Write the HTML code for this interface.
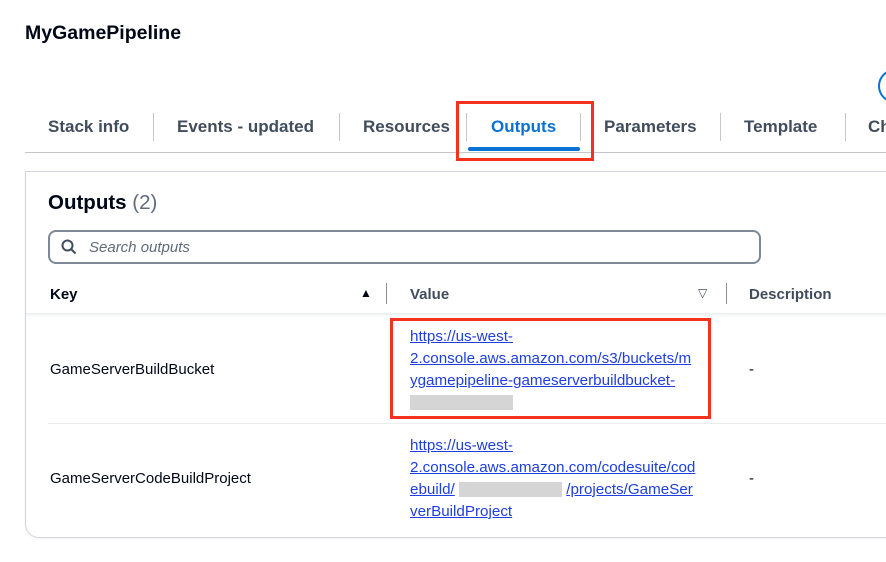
<!DOCTYPE html>
<html><head><style>
body{margin:0;width:886px;height:562px;background:#fff;font-family:"Liberation Sans",sans-serif;color:#000716;position:relative;overflow:hidden}
.a{position:absolute;white-space:nowrap}
.tab{position:absolute;top:117px;font-size:17px;font-weight:bold;color:#414d5c}
.sep{position:absolute;width:1px;background:#c6c6cd}
a{color:#1f3ee0;text-decoration:underline}
.lk{position:absolute;left:410px;font-size:15.2px;line-height:22px;width:310px}
.gray{display:inline-block;width:103px;height:15px;background:#d5d5d5;vertical-align:middle}
</style></head><body>
<div class="a" style="left:25px;top:22px;font-size:19.5px;font-weight:bold">MyGamePipeline</div>
<div class="a" style="left:878px;top:69px;width:30px;height:30px;border:2px solid #0972d3;border-radius:50%"></div>
<div class="tab" style="left:48px">Stack info</div>
<div class="sep" style="left:153px;top:113px;height:28px"></div>
<div class="tab" style="left:177px">Events - updated</div>
<div class="sep" style="left:339px;top:113px;height:28px"></div>
<div class="tab" style="left:363px">Resources</div>
<div class="sep" style="left:466px;top:113px;height:28px"></div>
<div class="tab" style="left:491px;color:#0972d3">Outputs</div>
<div class="sep" style="left:580px;top:113px;height:28px"></div>
<div class="tab" style="left:604px">Parameters</div>
<div class="sep" style="left:720px;top:113px;height:28px"></div>
<div class="tab" style="left:744px">Template</div>
<div class="sep" style="left:845px;top:113px;height:28px"></div>
<div class="tab" style="left:868px">Ch</div>
<div class="a" style="left:468px;top:147px;width:112px;height:4px;background:#0972d3;border-radius:2px"></div>
<div class="a" style="left:25px;top:152px;width:861px;height:1px;background:#c6c6cd"></div>
<div class="a" style="left:456px;top:101px;width:132px;height:54px;border:3px solid #f4321d"></div>
<div class="a" style="left:25px;top:171px;width:880px;height:365px;border:1px solid #d1d5db;border-radius:0 0 0 14px;box-shadow:0 1px 2px rgba(0,0,0,.05)"></div>
<div class="a" style="left:48px;top:191px;font-size:20.5px;font-weight:bold">Outputs <span style="font-weight:normal;color:#5f6b7a">(2)</span></div>
<div class="a" style="left:48px;top:230px;width:709px;height:30px;border:2px solid #7d8998;border-radius:8px"></div>
<svg class="a" style="left:61px;top:239px" width="16" height="16" viewBox="0 0 16 16"><circle cx="6.5" cy="6.5" r="5" fill="none" stroke="#414d5c" stroke-width="2"/><path d="M10 10l4.5 4.5" stroke="#414d5c" stroke-width="2"/></svg>
<div class="a" style="left:89px;top:239px;font-size:15px;font-style:italic;color:#5f6b7a">Search outputs</div>
<div class="a" style="left:50px;top:286px;font-size:15px;font-weight:bold">Key</div>
<div class="a" style="left:360px;top:286px;font-size:12px">▲</div>
<div class="sep" style="left:386px;top:283px;height:21px;background:#8c8c94"></div>
<div class="a" style="left:410px;top:286px;font-size:15px;font-weight:bold;color:#414d5c">Value</div>
<div class="a" style="left:698px;top:286px;font-size:12px;color:#414d5c">▽</div>
<div class="sep" style="left:726px;top:283px;height:21px;background:#8c8c94"></div>
<div class="a" style="left:749px;top:286px;font-size:15px;font-weight:bold;color:#414d5c">Description</div>
<div class="a" style="left:26px;top:313px;width:860px;height:4px;background:linear-gradient(#e9ebed,#fff)"></div>
<div class="a" style="left:50px;top:361px;font-size:15px">GameServerBuildBucket</div>
<div class="lk" style="top:326px"><a>https://us-west-<br>2.console.aws.amazon.com/s3/buckets/m<br>ygamepipeline-gameserverbuildbucket-</a><br><span class="gray"></span></div>
<div class="a" style="left:749px;top:361px;font-size:15px">-</div>
<div class="a" style="left:390px;top:318px;width:315px;height:95px;border:3px solid #f4321d"></div>
<div class="a" style="left:48px;top:423px;width:838px;height:1px;background:#e9ebed"></div>
<div class="a" style="left:50px;top:470px;font-size:15px">GameServerCodeBuildProject</div>
<div class="lk" style="top:435px"><a>https://us-west-<br>2.console.aws.amazon.com/codesuite/cod<br>ebuild/</a> <span class="gray"></span> <a>/projects/GameSer<br>verBuildProject</a></div>
<div class="a" style="left:749px;top:470px;font-size:15px">-</div>
</body></html>
